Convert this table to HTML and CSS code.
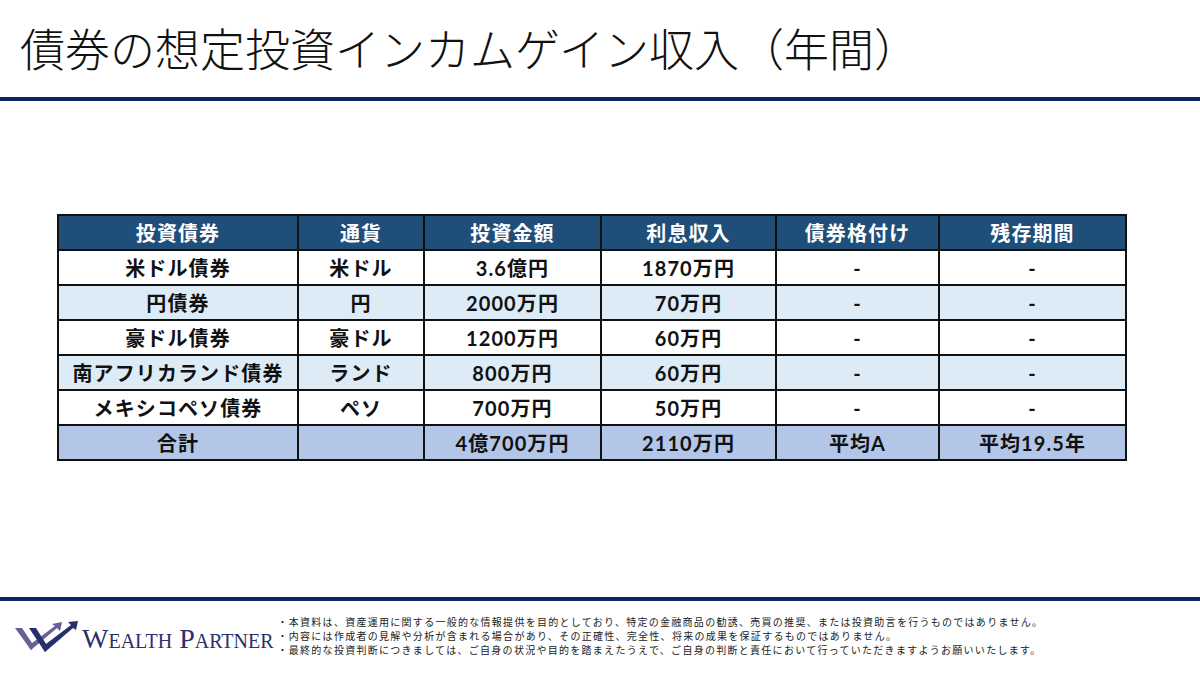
FILE: index.html
```html
<!DOCTYPE html>
<html lang="ja">
<head>
<meta charset="utf-8">
<link rel="stylesheet" href="styles.css">
</head>
<body>
<div class="slide">
  <header class="head">
    <h1 class="title">債券の想定投資インカムゲイン収入（年間）</h1>
  </header>
  <main class="main">
    <table class="tbl">
      <colgroup>
        <col style="width:240px"><col style="width:126px"><col style="width:177px"><col style="width:175px"><col style="width:163px"><col style="width:187px">
      </colgroup>
      <thead>
        <tr><th>投資債券</th><th>通貨</th><th>投資金額</th><th>利息収入</th><th>債券格付け</th><th>残存期間</th></tr>
      </thead>
      <tbody>
        <tr><td>米ドル債券</td><td>米ドル</td><td>3.6億円</td><td>1870万円</td><td>-</td><td>-</td></tr>
        <tr class="alt"><td>円債券</td><td>円</td><td>2000万円</td><td>70万円</td><td>-</td><td>-</td></tr>
        <tr><td>豪ドル債券</td><td>豪ドル</td><td>1200万円</td><td>60万円</td><td>-</td><td>-</td></tr>
        <tr class="alt"><td>南アフリカランド債券</td><td>ランド</td><td>800万円</td><td>60万円</td><td>-</td><td>-</td></tr>
        <tr><td>メキシコペソ債券</td><td>ペソ</td><td>700万円</td><td>50万円</td><td>-</td><td>-</td></tr>
        <tr class="total"><td>合計</td><td></td><td>4億700万円</td><td>2110万円</td><td>平均A</td><td>平均19.5年</td></tr>
      </tbody>
    </table>
  </main>
  <footer class="foot">
    <div class="brand">
      <svg class="logo" width="64" height="32" viewBox="0 0 64 32">
        <polygon points="0,7 7,7 19,25 16,29" fill="#6b5f96"/>
        <polygon points="16,29 13,25 40,5 37,3 47,1 45,10 42,7" fill="#6b5f96"/>
        <polygon points="14,7 21,7 33,26 30,31" fill="#27306a"/>
        <polygon points="30,31 27,26 56,4 53,1 63,0 61,9 58,7" fill="#27306a"/>
      </svg>
      <span class="brand-name">Wealth Partner</span>
    </div>
    <ul class="notes">
      <li>・本資料は、資産運用に関する一般的な情報提供を目的としており、特定の金融商品の勧誘、売買の推奨、または投資助言を行うものではありません。</li>
      <li>・内容には作成者の見解や分析が含まれる場合があり、その正確性、完全性、将来の成果を保証するものではありません。</li>
      <li>・最終的な投資判断につきましては、ご自身の状況や目的を踏まえたうえで、ご自身の判断と責任において行っていただきますようお願いいたします。</li>
    </ul>
  </footer>
</div>
</body>
</html>
```

FILE: styles.css
```css
* { box-sizing: border-box; }
html, body { margin: 0; padding: 0; background: #fff; }
body { font-family: "Noto Sans CJK JP", sans-serif; }
.slide { width: 1200px; height: 675px; display: flex; flex-direction: column; overflow: hidden; }
.head { height: 101px; border-bottom: 4px solid #0c2461; padding: 18px 0 0 20px; }
.title { margin: 0; font-size: 45px; font-weight: 300; color: #111; line-height: 60px; letter-spacing: 0; white-space: nowrap; }
.main { flex: 1; display: flex; align-items: flex-start; padding: 113px 0 0 57px; }
.tbl { border-collapse: collapse; table-layout: fixed; width: 1068px; font-family: Lato, "Noto Sans CJK JP", sans-serif; font-weight: 700; font-size: 20px; letter-spacing: 1.1px; color: #111; }
.tbl th, .tbl td { border: 2px solid #111; height: 35px; padding: 0; text-align: center; vertical-align: middle; line-height: 22px; }
.tbl th { background: #1f4e79; color: #fff; }
.tbl td { background: #fff; }
.tbl tr.alt td { background: #ddebf7; }
.tbl tr.total td { background: #b4c6e7; }
.foot { height: 78px; border-top: 4px solid #0c2461; display: flex; align-items: flex-start; padding: 14px 0 0 15px; }
.brand { display: flex; align-items: center; gap: 3px; margin-top: 3px; }
.logo { display: block; }
.brand-name { font-family: "Liberation Serif", serif; font-variant: small-caps; font-size: 28px; color: #2b2f6b; letter-spacing: 0; margin-top: 5px; }
.notes { list-style: none; margin: 0 0 0 4px; padding: 0; font-size: 10px; letter-spacing: 1.28px; line-height: 14px; color: #222; }
.notes li { white-space: nowrap; }
```
